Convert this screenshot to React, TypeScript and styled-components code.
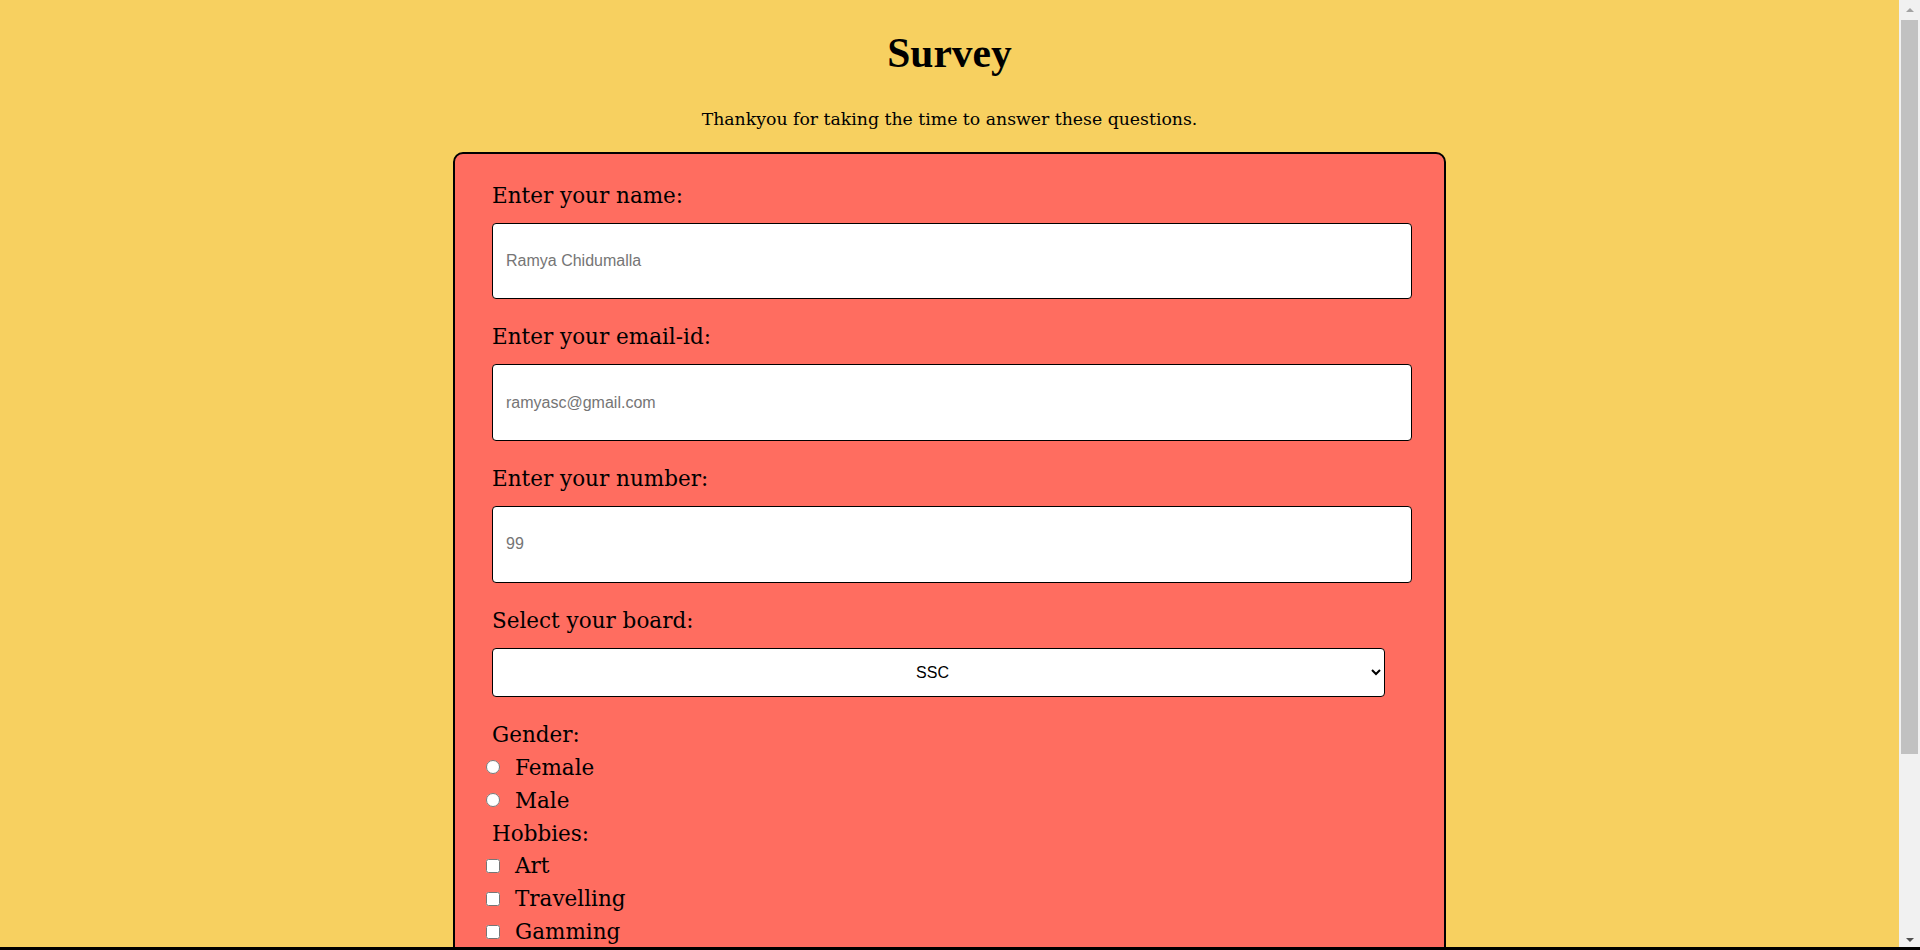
import React from "react";
import styled, { createGlobalStyle } from "styled-components";

const GlobalStyle = createGlobalStyle`
  html, body { margin: 0; padding: 0; }
  body {
    background: #F7D060;
    font-family: "DejaVu Serif", serif;
    color: #000;
  }
`;

const Page = styled.div`
  width: calc(100% - 21px);
  padding: 30px 0 40px;
  display: flex;
  flex-direction: column;
  align-items: center;
`;

const Title = styled.h1`
  margin: 0;
  font-family: "Liberation Serif", serif;
  font-weight: 700;
  font-size: 41.5px;
  line-height: 46px;
`;

const Subtitle = styled.p`
  margin: 32.5px 0 0;
  font-size: 17.3px;
  line-height: 20px;
`;

const Card = styled.form`
  box-sizing: border-box;
  width: 993px;
  margin-top: 23.3px;
  padding: 29px 32px 48px 37px;
  background: #FF6D60;
  border: 2px solid #000;
  border-radius: 10px;
  display: flex;
  flex-direction: column;
  align-items: flex-start;
`;

const FieldLabel = styled.label`
  display: block;
  font-size: 21.5px;
  line-height: 26px;
  margin-bottom: 14px;
`;

const TextInput = styled.input`
  box-sizing: border-box;
  width: 920px;
  height: 76.6px;
  margin: 0 0 25px;
  padding: 0 13px;
  border: 1px solid #000;
  border-radius: 4px;
  background: #fff;
  font-family: "Liberation Sans", Arial, sans-serif;
  font-size: 16px;
  color: #000;
  &::placeholder { color: #757575; }
`;

const Select = styled.select`
  box-sizing: border-box;
  width: 893px;
  height: 49.4px;
  margin: 0 0 21px;
  border: 1px solid #000;
  border-radius: 4px;
  background: #fff;
  font-family: "Liberation Sans", Arial, sans-serif;
  font-size: 16px;
  color: #000;
  text-align: center;
  text-align-last: center;
`;

const GroupLabel = styled.div`
  font-size: 21.5px;
  line-height: 33px;
  height: 33px;
`;

const Option = styled.label`
  display: flex;
  align-items: center;
  gap: 15px;
  height: 32.8px;
  margin-left: -6px;
  font-size: 21.5px;
  line-height: 33px;
  input { margin: 0; width: 14px; height: 14px; }
`;

const SubmitButton = styled.button`
  margin-top: 24px;
  padding: 10px 28px;
  border: 1px solid #000;
  border-radius: 4px;
  background: #fff;
  font-family: "DejaVu Serif", serif;
  font-size: 18px;
  cursor: pointer;
`;

const ScrollTrack = styled.div`
  position: fixed;
  top: 0;
  right: 0;
  bottom: 0;
  width: 21px;
  background: #f1f1f1;
  display: flex;
  flex-direction: column;
  align-items: center;
  justify-content: space-between;
`;

const ScrollArrow = styled.div<{ $dir: "up" | "down"; $color: string }>`
  width: 0;
  height: 0;
  margin: 8px 0;
  border-left: 4px solid transparent;
  border-right: 4px solid transparent;
  ${(p) =>
    p.$dir === "up"
      ? `border-bottom: 4px solid ${p.$color};`
      : `border-top: 4px solid ${p.$color};`}
`;

const ScrollThumb = styled.div`
  position: absolute;
  top: 20px;
  left: 2px;
  right: 2px;
  height: 734px;
  background: #c1c1c1;
`;

const BottomEdge = styled.div`
  position: fixed;
  left: 0;
  right: 0;
  bottom: 0;
  height: 3px;
  background: #000;
  z-index: 2;
`;

export default function App() {
  return (
    <>
      <GlobalStyle />
      <Page>
        <Title>Survey</Title>
        <Subtitle>Thankyou for taking the time to answer these questions.</Subtitle>
        <Card onSubmit={(e) => e.preventDefault()}>
          <FieldLabel htmlFor="name">Enter your name:</FieldLabel>
          <TextInput id="name" type="text" placeholder="Ramya Chidumalla" />
          <FieldLabel htmlFor="email">Enter your email-id:</FieldLabel>
          <TextInput id="email" type="email" placeholder="ramyasc@gmail.com" />
          <FieldLabel htmlFor="number">Enter your number:</FieldLabel>
          <TextInput id="number" type="number" placeholder="99" />
          <FieldLabel htmlFor="board">Select your board:</FieldLabel>
          <Select id="board" defaultValue="SSC">
            <option>SSC</option>
            <option>CBSE</option>
            <option>ICSE</option>
          </Select>
          <GroupLabel>Gender:</GroupLabel>
          <Option>
            <input type="radio" name="gender" value="female" />
            Female
          </Option>
          <Option>
            <input type="radio" name="gender" value="male" />
            Male
          </Option>
          <GroupLabel>Hobbies:</GroupLabel>
          <Option>
            <input type="checkbox" value="art" />
            Art
          </Option>
          <Option>
            <input type="checkbox" value="travelling" />
            Travelling
          </Option>
          <Option>
            <input type="checkbox" value="gamming" />
            Gamming
          </Option>
          <SubmitButton type="submit">Submit</SubmitButton>
        </Card>
      </Page>
      <ScrollTrack aria-hidden="true">
        <ScrollArrow $dir="up" $color="#a3a3a3" />
        <ScrollThumb />
        <ScrollArrow $dir="down" $color="#505050" />
      </ScrollTrack>
      <BottomEdge />
    </>
  );
}
